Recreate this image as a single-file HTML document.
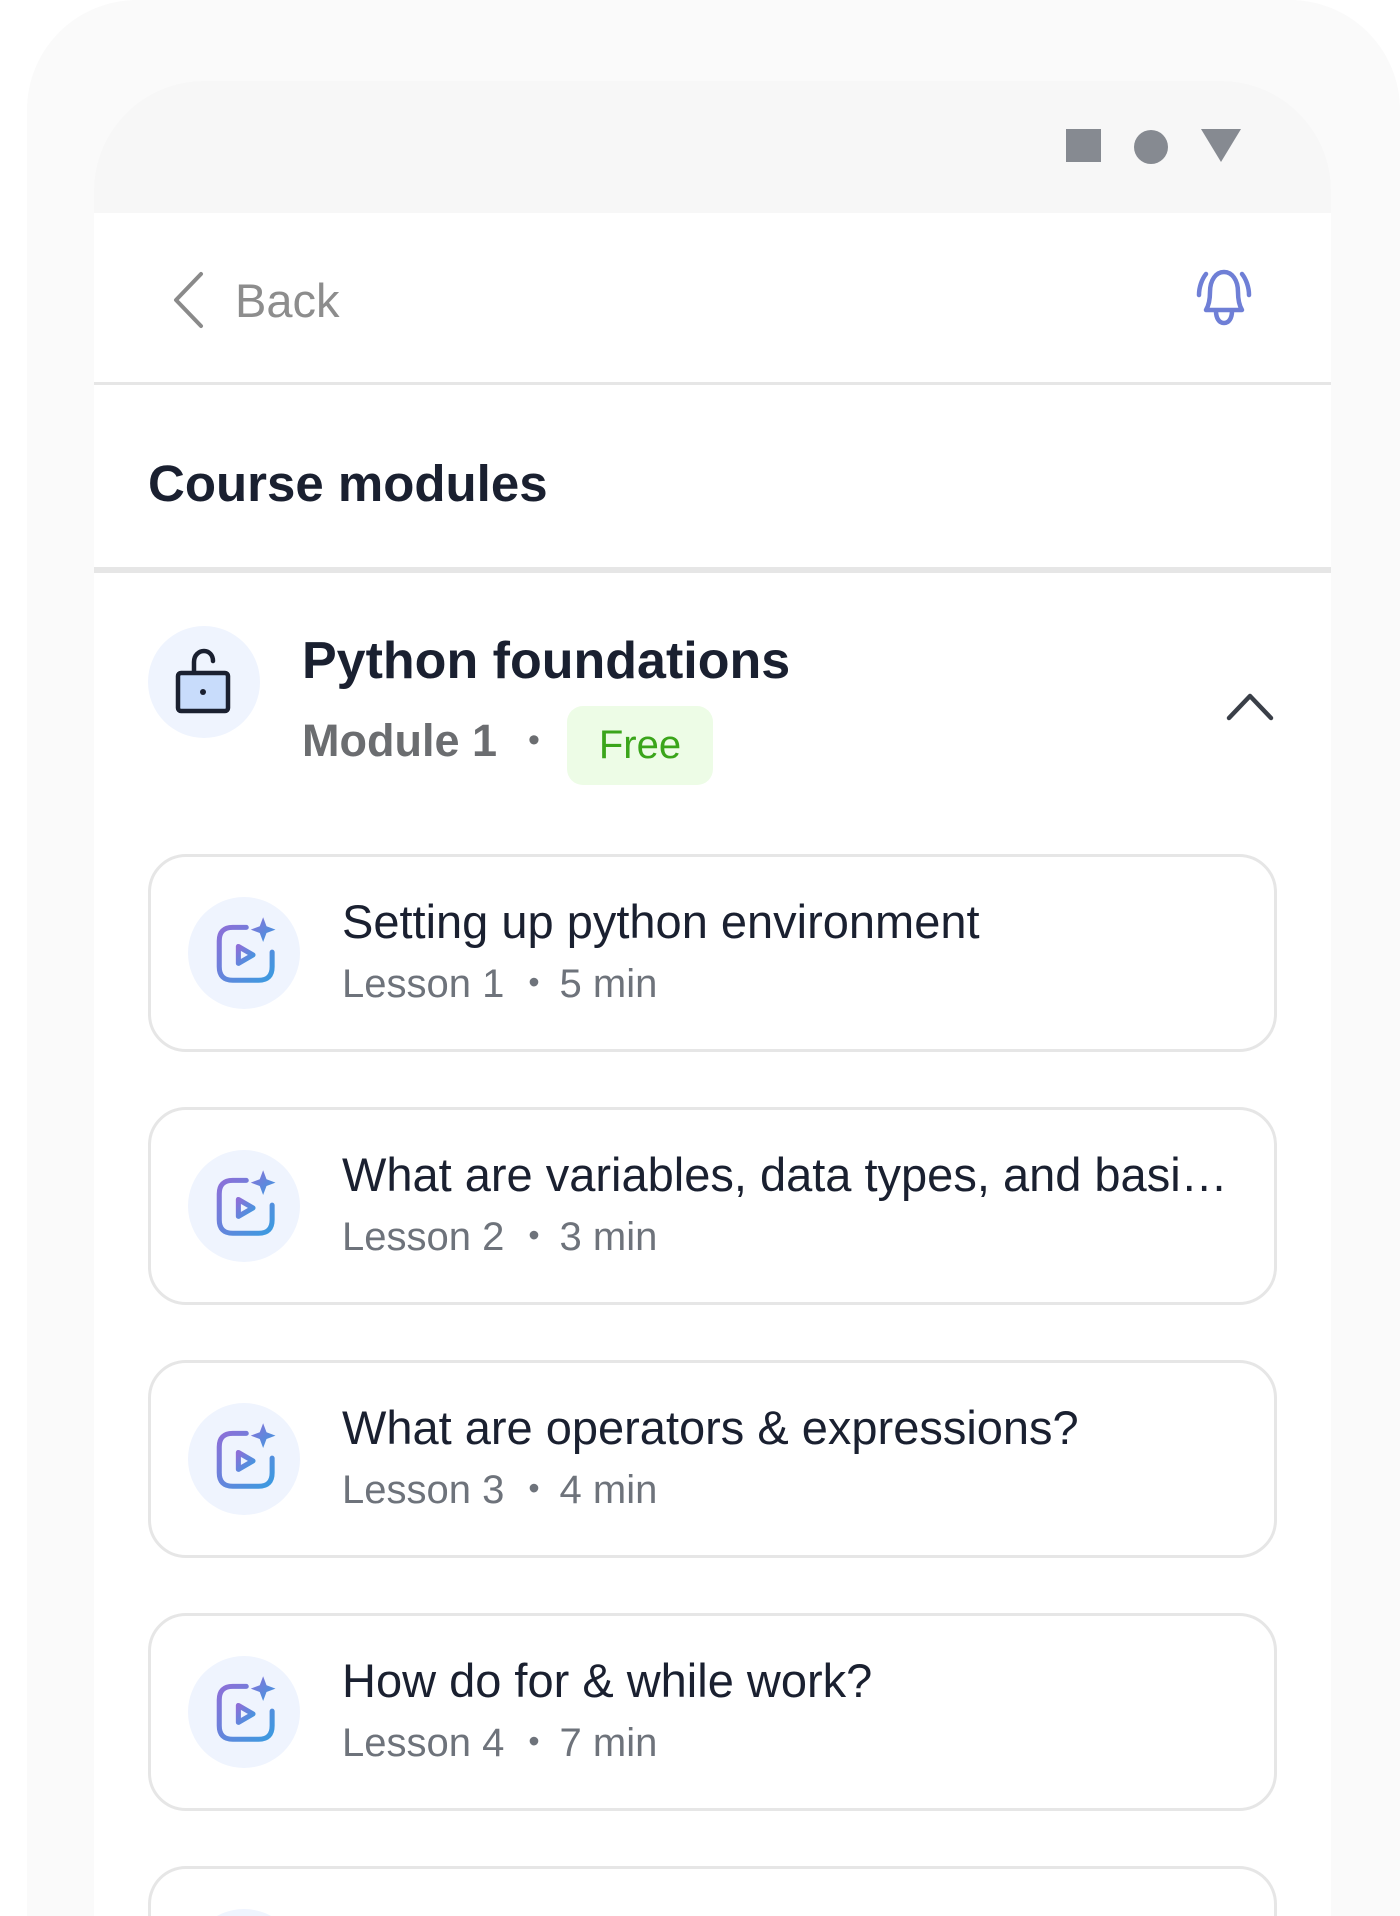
<!DOCTYPE html>
<html><head><meta charset="utf-8"><style>
*{margin:0;padding:0;box-sizing:border-box}
html,body{width:1400px;height:1916px;overflow:hidden}
body{background:#fff;font-family:"Liberation Sans",sans-serif;position:relative}
.outer{position:absolute;left:27px;top:0;width:1373px;height:1916px;background:#fafafa;border-radius:110px 110px 0 0}
.phone{position:absolute;left:94px;top:81px;width:1237px;height:1835px;background:#fff;border-radius:110px 110px 0 0;overflow:hidden}
.status{position:absolute;left:0;top:0;width:100%;height:132px;background:#f7f7f7}
.abs{position:absolute}
.card{position:absolute;left:54px;width:1129px;height:198px;border:3px solid #e6e6e6;border-radius:38px;background:#fff}
.ic{position:absolute;left:37px;top:40px;width:112px;height:112px;border-radius:50%;background:#eff4fe}
.ic svg{position:absolute;left:20px;top:18px}
.t{position:absolute;left:191px;top:37px;font-size:47px;color:#1a2030;white-space:nowrap;width:900px;overflow:hidden;text-overflow:ellipsis}
.s{position:absolute;left:191px;top:105px;font-size:40px;color:#6e737b;white-space:nowrap}
.s b{font-weight:normal;display:inline-block;margin:0 20px 0 24px;font-size:32px;position:relative;top:-4px}
</style></head><body>
<div class="outer"></div>
<div class="phone">
 <div class="status">
  <div class="abs" style="left:972px;top:48px;width:35px;height:33px;background:#868a91"></div>
  <div class="abs" style="left:1040px;top:49px;width:34px;height:34px;border-radius:50%;background:#868a91"></div>
  <svg class="abs" style="left:1107px;top:48px" width="40" height="33"><polygon points="0,0 40,0 20,33" fill="#868a91"/></svg>
 </div>
 <svg class="abs" style="left:77px;top:190px" width="34" height="58"><path d="M30 3 L5 29 L30 55" fill="none" stroke="#8a8a8a" stroke-width="4" stroke-linecap="round" stroke-linejoin="round"/></svg>
 <div class="abs" style="left:141px;top:192px;font-size:47px;color:#8d8d8d">Back</div>
 <svg class="abs" style="left:1097px;top:184px" width="66" height="68" viewBox="0 0 66 68"><g fill="none" stroke="#6f7fd6" stroke-width="4.5" stroke-linecap="round" stroke-linejoin="round"><path d="M8 30 C8 22 11 14 15 9"/><path d="M58 30 C58 22 55 14 51 9"/><path d="M15 45 C18 40 19 35 19 27 C19 15 25 7 33 7 C41 7 47 15 47 27 C47 35 48 40 51 45 Z"/><path d="M25 46 C25 53 28 58 33 58 C38 58 41 53 41 46"/></g></svg>
 <div class="abs" style="left:0;top:301px;width:100%;height:3px;background:#e6e6e6"></div>
 <div class="abs" style="left:54px;top:373px;font-size:51px;font-weight:bold;color:#1a2030">Course modules</div>
 <div class="abs" style="left:0;top:486px;width:100%;height:6px;background:#e6e6e6"></div>
 <div class="abs" style="left:54px;top:545px;width:112px;height:112px;border-radius:50%;background:#eff4fe"></div>
 <svg class="abs" style="left:80px;top:567px" width="60" height="68"><path d="M20 24 V14 C20 7 25 3 30 3 C35 3 39 7 39 13" fill="none" stroke="#1a2030" stroke-width="4.5" stroke-linecap="round"/><rect x="4" y="25" width="50" height="38" rx="3" fill="#c8dcfb" stroke="#1a2030" stroke-width="4.5"/><circle cx="29" cy="44" r="3" fill="#1a2030"/></svg>
 <div class="abs" style="left:208px;top:550px;font-size:52px;font-weight:bold;color:#1a2030">Python foundations</div>
 <div class="abs" style="left:208px;top:634px;font-size:45px;font-weight:bold;color:#6b6d70">Module 1</div>
 <div class="abs" style="left:434px;top:640px;font-size:34px;color:#6b6d70">•</div>
 <div class="abs" style="left:473px;top:625px;width:146px;height:79px;border-radius:16px;background:#edfce6;color:#3aa51a;font-size:40px;text-align:center;line-height:79px">Free</div>
 <svg class="abs" style="left:1132px;top:610px" width="48" height="30"><path d="M3 27 L24 5 L45 27" fill="none" stroke="#3a3f48" stroke-width="4.5" stroke-linecap="round" stroke-linejoin="round"/></svg>

 <div class="card" style="top:773px"><div class="ic"><svg width="72" height="72" viewBox="0 0 64 64"><defs><linearGradient id="g" x1="0" y1="0" x2="1" y2="1"><stop offset="0" stop-color="#8d6fd8"/><stop offset="1" stop-color="#3a9be0"/></linearGradient></defs><g fill="none" stroke="url(#g)" stroke-width="4.5" stroke-linecap="round" stroke-linejoin="round"><path d="M34 11 H22 C14 11 10 15 10 23 V46 C10 54 14 58 22 58 H45 C53 58 57 54 57 46 V33"/><path d="M27 28 V43 L40 35.5 Z"/></g><path d="M49 2 L52 10 L60 13 L52 16 L49 24 L46 16 L38 13 L46 10 Z" fill="url(#g)"/></svg></div><div class="t">Setting up python environment</div><div class="s">Lesson 1<b>•</b>5 min</div></div>

 <div class="card" style="top:1026px"><div class="ic"><svg width="72" height="72" viewBox="0 0 64 64"><g fill="none" stroke="url(#g)" stroke-width="4.5" stroke-linecap="round" stroke-linejoin="round"><path d="M34 11 H22 C14 11 10 15 10 23 V46 C10 54 14 58 22 58 H45 C53 58 57 54 57 46 V33"/><path d="M27 28 V43 L40 35.5 Z"/></g><path d="M49 2 L52 10 L60 13 L52 16 L49 24 L46 16 L38 13 L46 10 Z" fill="url(#g)"/></svg></div><div class="t" style="width:900px">What are variables, data types, and basi…</div><div class="s">Lesson 2<b>•</b>3 min</div></div>

 <div class="card" style="top:1279px"><div class="ic"><svg width="72" height="72" viewBox="0 0 64 64"><g fill="none" stroke="url(#g)" stroke-width="4.5" stroke-linecap="round" stroke-linejoin="round"><path d="M34 11 H22 C14 11 10 15 10 23 V46 C10 54 14 58 22 58 H45 C53 58 57 54 57 46 V33"/><path d="M27 28 V43 L40 35.5 Z"/></g><path d="M49 2 L52 10 L60 13 L52 16 L49 24 L46 16 L38 13 L46 10 Z" fill="url(#g)"/></svg></div><div class="t">What are operators &amp; expressions?</div><div class="s">Lesson 3<b>•</b>4 min</div></div>

 <div class="card" style="top:1532px"><div class="ic"><svg width="72" height="72" viewBox="0 0 64 64"><g fill="none" stroke="url(#g)" stroke-width="4.5" stroke-linecap="round" stroke-linejoin="round"><path d="M34 11 H22 C14 11 10 15 10 23 V46 C10 54 14 58 22 58 H45 C53 58 57 54 57 46 V33"/><path d="M27 28 V43 L40 35.5 Z"/></g><path d="M49 2 L52 10 L60 13 L52 16 L49 24 L46 16 L38 13 L46 10 Z" fill="url(#g)"/></svg></div><div class="t">How do for &amp; while work?</div><div class="s">Lesson 4<b>•</b>7 min</div></div>

 <div class="card" style="top:1785px;height:50px;border-bottom:none;border-radius:38px 38px 0 0;overflow:hidden"><div class="ic"></div></div>
</div>
</body></html>
